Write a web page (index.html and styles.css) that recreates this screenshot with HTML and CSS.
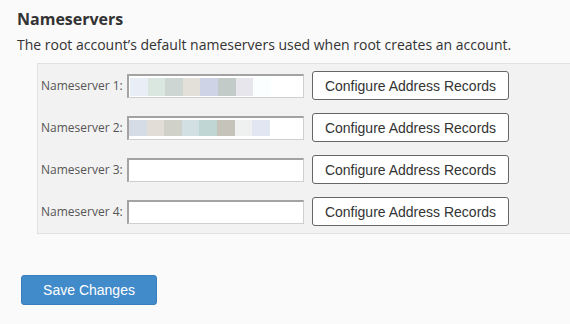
FILE: index.html
```html
<!DOCTYPE html>
<html>
<head>
<meta charset="utf-8">
<link rel="stylesheet" href="styles.css">
</head>
<body>
<div class="page">
  <h2 class="title">Nameservers</h2>
  <p class="desc">The root account’s default nameservers used when root creates an account.</p>
  <div class="panel">
    <div class="row">
      <label class="lbl">Nameserver 1:</label>
      <div class="field">
        <span class="blk" style="background:#e9edf6"></span><span class="blk" style="background:#d9e7e0"></span><span class="blk" style="background:#cdd6d3"></span><span class="blk" style="background:#e3dfd9"></span><span class="blk" style="background:#cfd3e6"></span><span class="blk" style="background:#c2cbc7"></span><span class="blk" style="background:#e6e6ec"></span><span class="blk" style="background:#fafeff"></span>
      </div>
      <button class="btn">Configure Address Records</button>
    </div>
    <div class="row">
      <label class="lbl">Nameserver 2:</label>
      <div class="field f2">
        <span class="blk" style="background:#d5dce6"></span><span class="blk" style="background:#e2ddd6"></span><span class="blk" style="background:#d0d2ca"></span><span class="blk" style="background:#d2e0e3"></span><span class="blk" style="background:#c0d6d4"></span><span class="blk" style="background:#c6c3bb"></span><span class="blk" style="background:#eff1f0"></span><span class="blk" style="background:#e1e6f2"></span>
      </div>
      <button class="btn">Configure Address Records</button>
    </div>
    <div class="row">
      <label class="lbl">Nameserver 3:</label>
      <div class="field"></div>
      <button class="btn">Configure Address Records</button>
    </div>
    <div class="row">
      <label class="lbl">Nameserver 4:</label>
      <div class="field"></div>
      <button class="btn">Configure Address Records</button>
    </div>
  </div>
  <button class="save">Save Changes</button>
</div>
</body>
</html>
```
FILE: styles.css
```css
html, body {
  margin: 0;
  padding: 0;
  background: #fafafa;
}
.page {
  padding: 9px 0 0 17px;
  font-family: "Open Sans", sans-serif;
  color: #333;
}
.title {
  margin: 0;
  font-size: 16px;
  font-weight: 700;
  line-height: 20px;
  color: #333;
}
.desc {
  margin: 7px 0 0;
  font-size: 14px;
  line-height: 18px;
  color: #333;
}
.panel {
  margin: 9px 0 0 20px;
  background: #f2f2f2;
  border: 1px solid #e2e2e2;
  border-right: none;
  padding: 7px 0 7px 3px;
  display: flex;
  flex-direction: column;
  gap: 13px;
}
.row {
  display: flex;
  align-items: center;
  height: 29px;
}
.lbl {
  font-size: 12px;
  color: #555;
  width: 86px;
}
.field {
  box-sizing: border-box;
  width: 177px;
  height: 24px;
  background: #fff;
  border: 2px solid #a3a3a3;
  border-right-color: #cfcfcf;
  border-bottom-color: #cfcfcf;
  border-width: 2px 1px 1px 2px;
  display: flex;
  padding: 2px 0 0 1px;
}
.f2 {
  padding-left: 0;
}
.blk {
  width: 17.6px;
  height: 18px;
  flex: none;
}
.f2 .blk {
  height: 16px;
}
.btn {
  margin-left: 8px;
  box-sizing: border-box;
  width: 197px;
  height: 29px;
  background: #fff;
  border: 1px solid #666;
  border-radius: 3px;
  font-family: "Liberation Sans", Arial, sans-serif;
  font-size: 14px;
  color: #333;
  padding: 0;
}
.save {
  display: block;
  margin: 41px 0 0 4px;
  box-sizing: border-box;
  width: 136px;
  height: 30px;
  background: #428bca;
  border: 1px solid #3a7fbd;
  border-radius: 3px;
  color: #fff;
  font-family: "Liberation Sans", Arial, sans-serif;
  font-size: 14px;
  padding: 0;
}
```
